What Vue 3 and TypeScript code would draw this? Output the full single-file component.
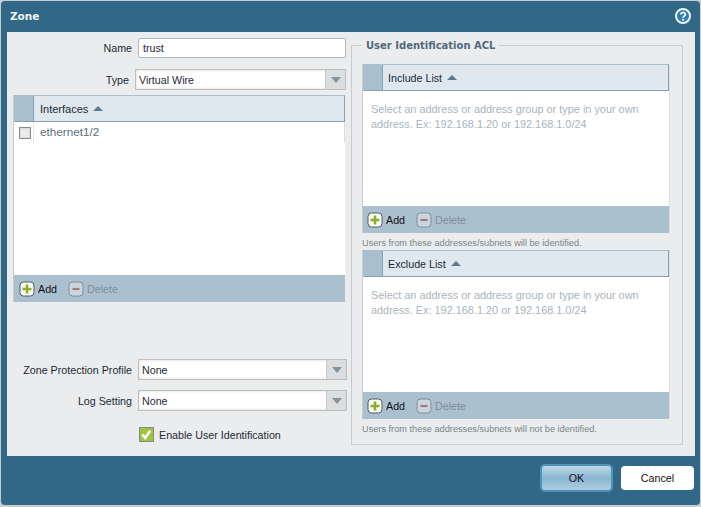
<script setup lang="ts">
interface AclList {
  title: string;
  note: string;
}

const aclLists: AclList[] = [
  { title: 'Include List', note: 'Users from these addresses/subnets will be identified.' },
  { title: 'Exclude List', note: 'Users from these addresses/subnets will not be identified.' },
];
</script>

<template>
  <div class="page">
    <div class="dialog">
      <header class="title-bar">
        <span class="title">Zone</span>
        <svg class="help" width="16" height="16" viewBox="0 0 16 16">
          <circle cx="8" cy="8" r="7" fill="#2f7fb5" stroke="#eef4f8" stroke-width="2" />
          <path d="M5.8 6.4a2.3 2 0 1 1 3.5 1.7c-.9.5-1.2.9-1.2 1.7" fill="none" stroke="#fff" stroke-width="1.7" />
          <rect x="7.2" y="10.8" width="1.8" height="1.8" fill="#fff" />
        </svg>
      </header>

      <div class="body">
        <section class="left">
          <div class="form-row name-row">
            <label class="label">Name</label>
            <div class="text-input">trust</div>
          </div>
          <div class="form-row type-row">
            <label class="label">Type</label>
            <div class="select">
              <span class="select-value">Virtual Wire</span>
              <span class="select-btn"><i class="select-arrow"></i></span>
            </div>
          </div>

          <div class="grid interfaces">
            <div class="grid-head">
              <span class="gutter"></span>
              <span class="head-text">Interfaces</span>
              <i class="sort"></i>
            </div>
            <div class="grid-row">
              <span class="row-check"><i class="box"></i></span>
              <span class="row-text">ethernet1/2</span>
            </div>
            <div class="grid-body"></div>
            <div class="toolbar">
              <span class="tool">
                <svg class="tool-icon" width="16" height="16" viewBox="0 0 16 16">
                  <rect x="1" y="1" width="14" height="14" rx="3.5" fill="#fbfcf4" stroke="#4a5a66" />
                  <path d="M8 3.5v9M3.5 8h9" stroke="#8fae2c" stroke-width="2.6" />
                </svg>
                Add
              </span>
              <span class="tool disabled">
                <svg class="tool-icon" width="16" height="16" viewBox="0 0 16 16">
                  <rect x="1" y="1" width="14" height="14" rx="3.5" fill="#c9d6df" stroke="#7d8e9a" />
                  <path d="M4.5 8h7" stroke="#a9796f" stroke-width="2.2" />
                </svg>
                Delete
              </span>
            </div>
          </div>

          <div class="form-row profile-row">
            <label class="label">Zone Protection Profile</label>
            <div class="select">
              <span class="select-value">None</span>
              <span class="select-btn"><i class="select-arrow"></i></span>
            </div>
          </div>
          <div class="form-row log-row">
            <label class="label">Log Setting</label>
            <div class="select">
              <span class="select-value">None</span>
              <span class="select-btn"><i class="select-arrow"></i></span>
            </div>
          </div>
          <div class="enable-row">
            <svg width="15" height="15" viewBox="0 0 15 15">
              <rect x=".5" y=".5" width="14" height="14" fill="#a4c23b" stroke="#7f8c8f" />
              <path d="M3.2 7.4l3 3.4 5-7" fill="none" stroke="#fff" stroke-width="2.6" />
            </svg>
            <span>Enable User Identification</span>
          </div>
        </section>

        <fieldset class="acl">
          <legend class="acl-legend">User Identification ACL</legend>
          <div v-for="list in aclLists" :key="list.title" class="acl-block">
            <div class="grid acl-grid">
              <div class="grid-head">
                <span class="gutter"></span>
                <span class="head-text">{{ list.title }}</span>
                <i class="sort"></i>
              </div>
              <div class="hint">
                Select an address or address group or type in your own<br />
                address. Ex: 192.168.1.20 or 192.168.1.0/24
              </div>
              <div class="toolbar">
                <span class="tool">
                  <svg class="tool-icon" width="16" height="16" viewBox="0 0 16 16">
                    <rect x="1" y="1" width="14" height="14" rx="3.5" fill="#fbfcf4" stroke="#4a5a66" />
                    <path d="M8 3.5v9M3.5 8h9" stroke="#8fae2c" stroke-width="2.6" />
                  </svg>
                  Add
                </span>
                <span class="tool disabled">
                  <svg class="tool-icon" width="16" height="16" viewBox="0 0 16 16">
                    <rect x="1" y="1" width="14" height="14" rx="3.5" fill="#c9d6df" stroke="#7d8e9a" />
                    <path d="M4.5 8h7" stroke="#a9796f" stroke-width="2.2" />
                  </svg>
                  Delete
                </span>
              </div>
            </div>
            <p class="note">{{ list.note }}</p>
          </div>
        </fieldset>
      </div>

      <footer class="footer">
        <button class="btn ok">OK</button>
        <button class="btn cancel">Cancel</button>
      </footer>
    </div>
  </div>
</template>

<style>
html,
body {
  margin: 0;
  background: #c9cdcf;
}
</style>

<style scoped>
.page {
  width: 701px;
  height: 507px;
  box-sizing: border-box;
  padding: 1px 1px 2px 1px;
  font-family: "Liberation Sans", "Noto Sans", sans-serif;
  font-size: 10.7px;
  color: #1d2a33;
  overflow: hidden;
}

.dialog {
  height: 504px;
  display: flex;
  flex-direction: column;
  background: #316887;
  border-radius: 4px;
  padding: 0 5px 0 6px;
}

.title-bar {
  height: 31px;
  flex-shrink: 0;
  display: flex;
  align-items: center;
  justify-content: space-between;
  padding: 0 4px 2px 3px;
  box-sizing: border-box;
}

.title {
  color: #eef3f6;
  font-family: "DejaVu Sans", sans-serif;
  font-size: 10.5px;
  font-weight: 700;
}

.body {
  height: 424px;
  flex-shrink: 0;
  display: flex;
  background: #ebecee;
  box-sizing: border-box;
  padding: 6px 12px 0 6px;
}

.left {
  width: 333px;
  flex-shrink: 0;
}

.form-row {
  display: flex;
  align-items: center;
  justify-content: flex-end;
}

.label {
  margin-right: 6px;
  white-space: nowrap;
}

.name-row {
  height: 20px;
}

.text-input {
  width: 208px;
  height: 20px;
  box-sizing: border-box;
  border: 1px solid #b5b8b8;
  border-radius: 2px;
  background: #fff;
  line-height: 18px;
  padding-left: 4px;
}

.type-row {
  margin-top: 11px;
}

.select {
  height: 21px;
  box-sizing: border-box;
  display: flex;
  border: 1px solid #bdbfbf;
  background: #fff;
  box-shadow: inset 0 0 3px #d5d5d5;
}

.type-row .select {
  width: 211px;
}

.profile-row .select,
.log-row .select {
  width: 209px;
  margin-right: -1px;
}

.profile-row {
  margin-top: 57px;
}

.log-row {
  margin-top: 10px;
}

.select-value {
  flex: 1;
  line-height: 20px;
  padding-left: 3px;
}

.select-btn {
  width: 19px;
  display: flex;
  align-items: center;
  justify-content: center;
  background: #dcdddf;
  border-left: 1px solid #c6c8c9;
}

.select-arrow {
  width: 0;
  height: 0;
  border-left: 5px solid transparent;
  border-right: 5px solid transparent;
  border-top: 6px solid #84949f;
}

.enable-row {
  display: flex;
  align-items: center;
  gap: 5px;
  margin: 16px 0 0 126px;
}

.grid {
  display: flex;
  flex-direction: column;
  background: #fff;
  box-sizing: border-box;
}

.interfaces {
  width: 332px;
  height: 207px;
  margin-top: 5px;
  border-left: 1px solid #c6ccd0;
}

.grid-head {
  height: 27px;
  flex-shrink: 0;
  box-sizing: border-box;
  display: flex;
  align-items: center;
  background: #dfe8ef;
  border: 1px solid #86a0b2;
  border-left-color: #a9bfce;
  border-top-color: #a9bfce;
}

.gutter {
  width: 19px;
  height: 100%;
  flex-shrink: 0;
  background: #a9bfce;
  border-right: 1px solid #86a0b2;
  box-sizing: border-box;
}

.head-text {
  margin-left: 5px;
}

.interfaces .head-text {
  margin-left: 6px;
  font-size: 11px;
}

.sort {
  width: 0;
  height: 0;
  margin-left: 5px;
  border-left: 5px solid transparent;
  border-right: 5px solid transparent;
  border-bottom: 5px solid #5d7a90;
}

.grid-row {
  height: 21px;
  flex-shrink: 0;
  display: flex;
  align-items: center;
  border-right: 1px solid #dcdfe1;
}

.row-check {
  width: 20px;
  height: 100%;
  flex-shrink: 0;
  display: flex;
  align-items: center;
  justify-content: center;
  padding-left: 2px;
  border-right: 1px solid #e3e5e6;
  box-sizing: border-box;
}

.box {
  width: 10px;
  height: 10px;
  border: 1px solid #8b8f91;
  background: #ececec;
  box-shadow: inset 0 0 2px #b5b5b5;
}

.row-text {
  margin-left: 6px;
  padding-bottom: 2px;
  font-size: 11.7px;
  color: #5a6f7d;
}

.grid-body {
  flex: 1;
}

.toolbar {
  height: 27px;
  flex-shrink: 0;
  display: flex;
  align-items: center;
  gap: 11px;
  background: #abc0cf;
  padding-left: 5px;
  color: #111;
}

.acl-grid .toolbar {
  padding-left: 4px;
}

.tool {
  display: flex;
  align-items: center;
  gap: 3px;
}

.tool.disabled {
  color: #7e8f9b;
}

.acl {
  flex: 1;
  min-width: 0;
  height: 407px;
  box-sizing: border-box;
  margin: 0 0 0 5px;
  padding: 0 12px 0 10px;
  border: 1px solid #c8cacb;
  display: block;
}

.acl-legend {
  margin-left: 0;
  padding: 2px 4px 0;
  font-family: "DejaVu Sans", sans-serif;
  font-size: 10px;
  font-weight: 700;
  color: #53697a;
  line-height: 12px;
}

.acl-block {
  display: flex;
  flex-direction: column;
}

.acl-block:first-of-type {
  margin-top: 12px;
}

.acl-grid {
  width: 308px;
  height: 169px;
  border-left: 1px solid #c6ccd0;
  border-right: 1px solid #dcdfe1;
}

.hint {
  flex: 1;
  padding: 11px 0 0 8px;
  color: #a9b4bc;
  line-height: 15px;
  font-size: 10.9px;
}

.note {
  margin: 0;
  height: 17px;
  line-height: 20px;
  font-size: 9.2px;
  color: #7d8488;
  white-space: nowrap;
}

.footer {
  flex: 1;
  display: flex;
  align-items: center;
  justify-content: flex-end;
  gap: 8px;
  padding: 0 1px 5px 0;
}

.btn {
  font: inherit;
  color: #111;
  padding: 0;
  cursor: pointer;
}

.ok {
  width: 73px;
  height: 28px;
  border: 2px solid #4f93ba;
  border-radius: 5px;
  background: linear-gradient(#c2d8e6, #8ab6d1 50%, #aeccdf);
}

.cancel {
  width: 73px;
  height: 24px;
  border: 0;
  border-radius: 4px;
  background: #fff;
}
</style>
